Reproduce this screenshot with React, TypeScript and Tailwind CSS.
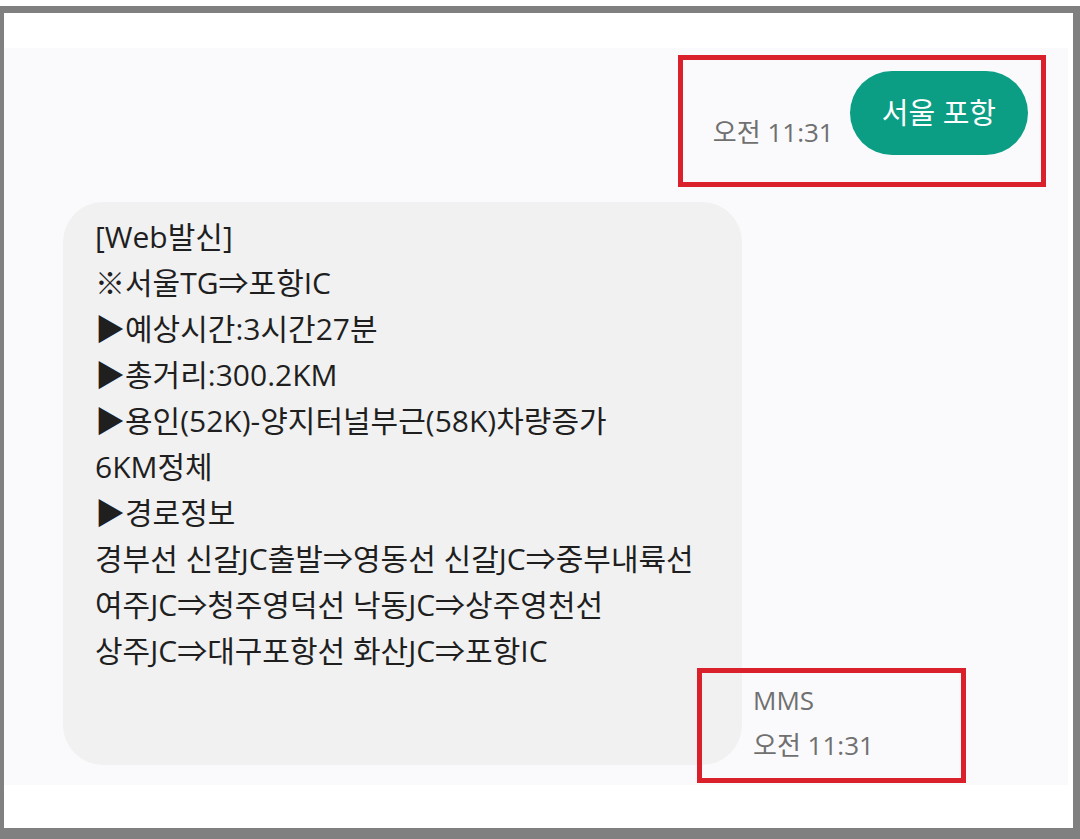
import React from 'react'

const lines = [
  '[Web발신]',
  '※서울TG⇒포항IC',
  '▶예상시간:3시간27분',
  '▶총거리:300.2KM',
  '▶용인(52K)-양지터널부근(58K)차량증가',
  '6KM정체',
  '▶경로정보',
  '경부선 신갈JC출발⇒영동선 신갈JC⇒중부내륙선',
  '여주JC⇒청주영덕선 낙동JC⇒상주영천선',
  '상주JC⇒대구포항선 화산JC⇒포항IC',
]

function App() {
  return (
    <div className="h-[839px] w-[1080px] overflow-hidden bg-white pt-[6px] font-['Open_Sans','Noto_Sans_CJK_KR',sans-serif]">
      <div className="h-[833px] border-b-[11px] border-l-4 border-r-[7px] border-t-[7px] border-[#808080] bg-white pt-[35px]">
        <div className="relative mr-[5px] h-[737px] bg-[#fafafc]">
          {/* sent message */}
          <div className="flex justify-end pr-[22px] pt-[7px]">
            <div className="flex h-[132px] w-[368px] items-start justify-end gap-[16px] border-[5px] border-[#d9202b] pr-[13px] pt-[11px]">
              <span className="mt-[46px] whitespace-nowrap text-[26px] leading-[30px] text-[#707070]">오전 11:31</span>
              <div className="flex h-[84px] items-center whitespace-nowrap rounded-full bg-[#0b9e84] px-[32px] text-[29px] text-white">
                서울 포항
              </div>
            </div>
          </div>

          {/* received message */}
          <div className="mt-[15px] flex items-end pl-[59px]">
            <div className="h-[563px] w-[679px] shrink-0 rounded-[40px] bg-[#f1f1f1] pl-[32px] pt-[12px] text-[30px] leading-[46px] text-[#1f1f1f]">
              {lines.map((line) => (
                <div key={line} className="whitespace-nowrap">
                  {line}
                </div>
              ))}
            </div>
            <div className="mb-[-3px] ml-[11px] flex flex-col text-[26px] leading-[45px] text-[#707070]">
              <span>MMS</span>
              <span className="whitespace-nowrap">오전 11:31</span>
            </div>
          </div>

          <div className="absolute left-[693px] top-[620px] h-[115px] w-[269px] border-[5px] border-[#d9202b]"></div>
        </div>
      </div>
    </div>
  )
}

export default App
